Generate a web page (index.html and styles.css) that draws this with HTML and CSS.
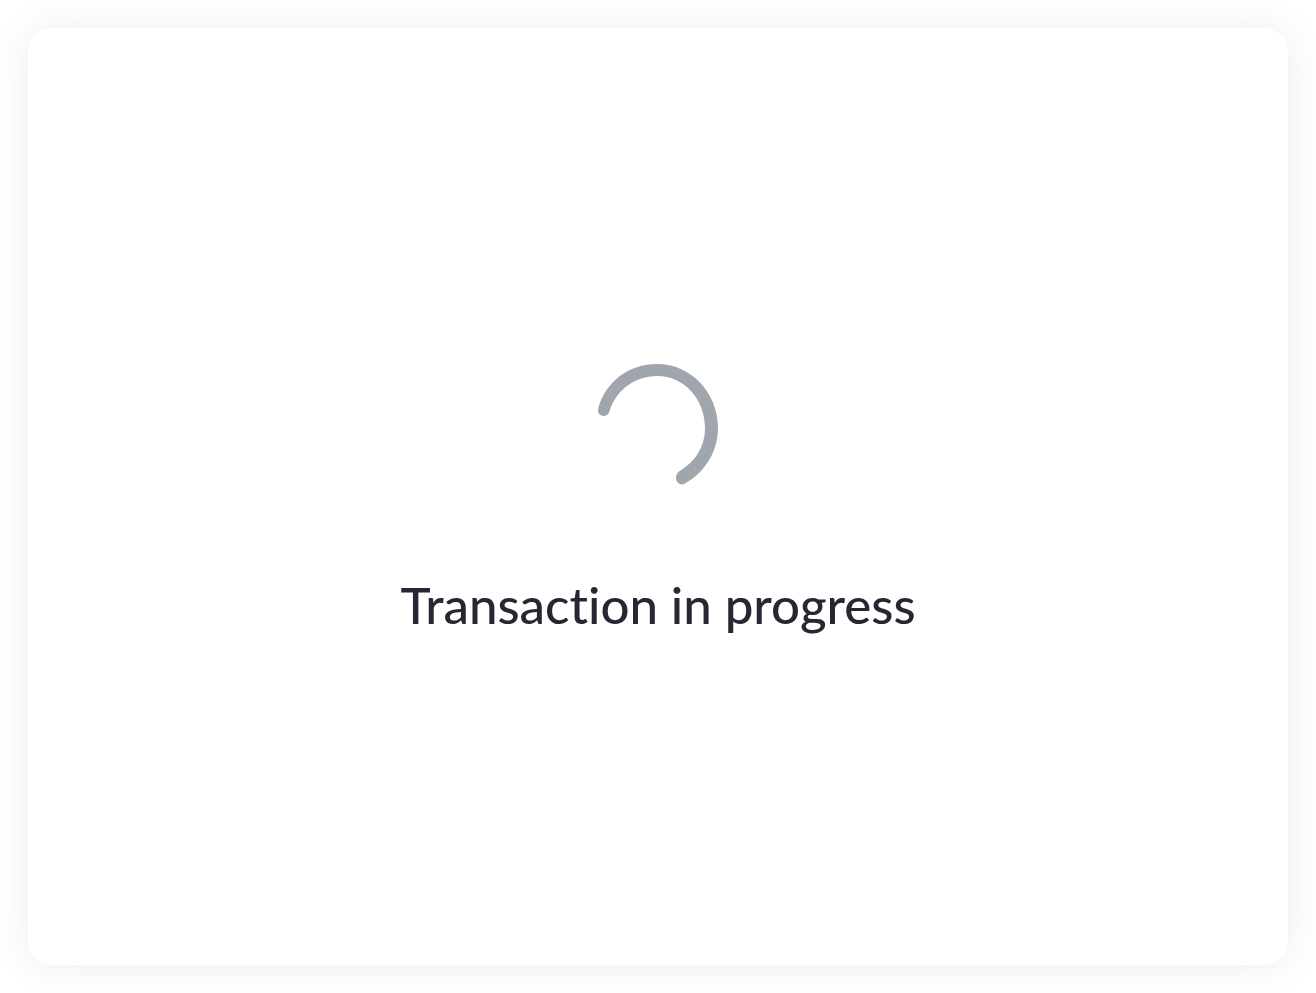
FILE: index.html
```html
<!DOCTYPE html>
<html lang="en">
<head>
    <meta charset="UTF-8">
    <meta name="viewport" content="width=device-width, initial-scale=1.0">
    <title>Transaction in progress</title>
    <link rel="stylesheet" href="styles.css">
</head>
<body>
    <main class="card" role="status">
        <svg class="spinner" viewBox="18 14 120 121" aria-hidden="true">
            <path d="M18.2 58.4C25.5 32 48.5 14 77 14C111 14 138 42.5 138 78C138 101 125.500 122 105 133.500C101 136 96 133 96 128C96 125 97 123 99.500 121C115 112 125 97 125 78C125 49 104 26 77 26C55 26 36 40 29.600 61C28.500 64.500 26.500 66 23.700 66C20 66 17 63 18.200 58.400Z"/>
        </svg>
        <h1 class="message">Transaction in progress</h1>
    </main>
</body>
</html>
```

FILE: styles.css
```css
* {
    box-sizing: border-box;
}

body {
    display: flex;
    min-height: 100vh;
    margin: 0;
    padding: 28px;
    background: #fff;
    color: #272633;
    font-family: Lato, "Liberation Sans", sans-serif;
}

.card {
    display: flex;
    flex: 1;
    flex-direction: column;
    align-items: center;
    justify-content: center;
    gap: 96px;
    border-radius: 24px;
    background: #fff;
    box-shadow: 0 0 40px rgba(0, 0, 0, 0.08);
}

.spinner {
    width: 120px;
    height: 121px;
    fill: #9fa6ae;
}

.message {
    margin: 0;
    font-size: 51px;
    font-weight: 500;
    font-variant-ligatures: none;
    line-height: 48px;
    text-align: center;
}
```
